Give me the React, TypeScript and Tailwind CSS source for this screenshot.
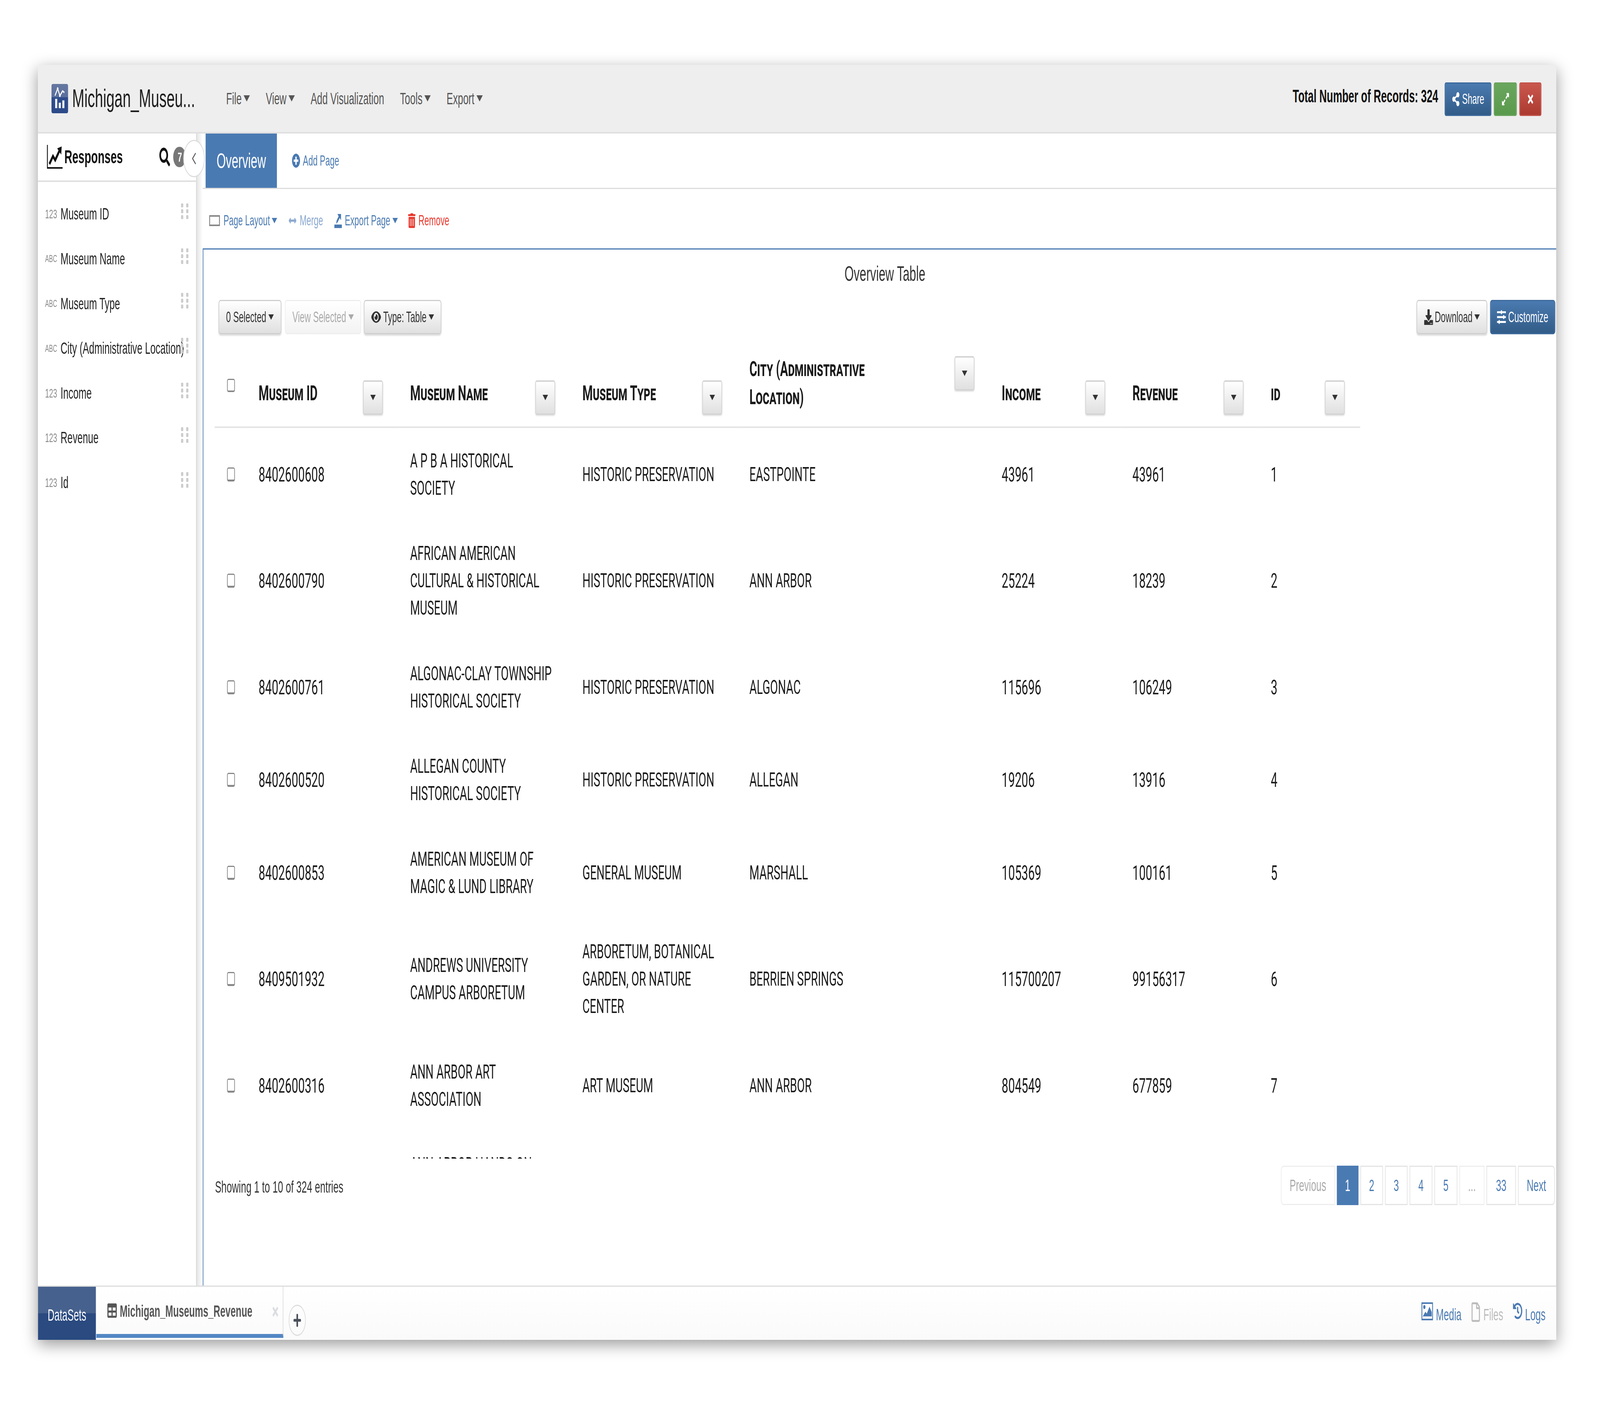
import { ChevronLeft } from "lucide-react";
import {
  FaSearch,
  FaShareAlt,
  FaExpandAlt,
  FaTimes,
  FaPlusCircle,
  FaArrowsAltH,
  FaTrashAlt,
  FaEye,
  FaDownload,
  FaSlidersH,
  FaTable,
  FaPlus,
  FaRegFile,
  FaHistory,
} from "react-icons/fa";

const fields = [
  { kind: "123", name: "Museum ID" },
  { kind: "ABC", name: "Museum Name" },
  { kind: "ABC", name: "Museum Type" },
  { kind: "ABC", name: "City (Administrative Location)" },
  { kind: "123", name: "Income" },
  { kind: "123", name: "Revenue" },
  { kind: "123", name: "Id" },
];

const rows = [
  ["8402600608", "A P B A HISTORICAL\nSOCIETY", "HISTORIC PRESERVATION", "EASTPOINTE", "43961", "43961", "1"],
  ["8402600790", "AFRICAN AMERICAN\nCULTURAL & HISTORICAL\nMUSEUM", "HISTORIC PRESERVATION", "ANN ARBOR", "25224", "18239", "2"],
  ["8402600761", "ALGONAC-CLAY TOWNSHIP\nHISTORICAL SOCIETY", "HISTORIC PRESERVATION", "ALGONAC", "115696", "106249", "3"],
  ["8402600520", "ALLEGAN COUNTY\nHISTORICAL SOCIETY", "HISTORIC PRESERVATION", "ALLEGAN", "19206", "13916", "4"],
  ["8402600853", "AMERICAN MUSEUM OF\nMAGIC & LUND LIBRARY", "GENERAL MUSEUM", "MARSHALL", "105369", "100161", "5"],
  ["8409501932", "ANDREWS UNIVERSITY\nCAMPUS ARBORETUM", "ARBORETUM, BOTANICAL\nGARDEN, OR NATURE\nCENTER", "BERRIEN SPRINGS", "115700207", "99156317", "6"],
  ["8402600316", "ANN ARBOR ART\nASSOCIATION", "ART MUSEUM", "ANN ARBOR", "804549", "677859", "7"],
  ["", "ANN ARBOR HANDS-ON\nMUSEUM", "", "", "", "", ""],
];

const columns = [
  { label: "Museum ID", width: "w-[678px]" },
  { label: "Museum Name", width: "w-[771px]" },
  { label: "Museum Type", width: "w-[747px]" },
  { label: "City (Administrative\nLocation)", width: "w-[1129px]" },
  { label: "Income", width: "w-[585px]" },
  { label: "Revenue", width: "w-[619px]" },
  { label: "id", width: "w-[453px]" },
];

const pages = [
  { label: "Previous", cls: "w-[242px] rounded-l-[12px] text-[#aaaaaa] border-[#eeeeee]" },
  { label: "1", cls: "w-[96px] bg-[#4a7ab2] text-white border-[#4a7ab2]" },
  { label: "2", cls: "w-[101px] text-[#4a7ab2] border-[#e4e4e4]" },
  { label: "3", cls: "w-[101px] text-[#4a7ab2] border-[#e4e4e4]" },
  { label: "4", cls: "w-[102px] text-[#4a7ab2] border-[#e4e4e4]" },
  { label: "5", cls: "w-[103px] text-[#4a7ab2] border-[#e4e4e4]" },
  { label: "...", cls: "w-[112px] text-[#aaaaaa] border-[#eeeeee]" },
  { label: "33", cls: "w-[132px] text-[#4a7ab2] border-[#e4e4e4]" },
  { label: "Next", cls: "w-[165px] rounded-r-[12px] text-[#4a7ab2] border-[#e4e4e4]" },
];

function Caret({ className = "" }: { className?: string }) {
  return (
    <span
      className={`inline-block w-0 h-0 border-x-[12px] border-x-transparent border-t-[14px] ${className}`}
    />
  );
}

function Logo() {
  return (
    <svg viewBox="0 0 75 75" className="w-[75px] h-[75px] shrink-0">
      <defs>
        <linearGradient id="logoFill" x1="0" y1="0" x2="0" y2="1">
          <stop offset="0" stopColor="#66789f" />
          <stop offset="0.45" stopColor="#5a6f9f" />
          <stop offset="0.46" stopColor="#2f4d8c" />
          <stop offset="1" stopColor="#2c4a88" />
        </linearGradient>
      </defs>
      <rect width="75" height="75" rx="6" fill="url(#logoFill)" />
      <path d="M16 30 L28 12 L38 30 L50 18 L58 22" fill="none" stroke="#fff" strokeWidth="4" />
      <circle cx="28" cy="12" r="3.5" fill="#fff" />
      <circle cx="38" cy="30" r="3.5" fill="#fff" />
      <rect x="17" y="38" width="9" height="24" fill="#fff" />
      <rect x="33" y="48" width="9" height="14" fill="#fff" />
      <rect x="49" y="42" width="9" height="20" fill="#fff" />
    </svg>
  );
}

function TrendIcon() {
  return (
    <svg viewBox="0 0 72 62" className="w-[72px] h-[62px] shrink-0">
      <path d="M2 0 V59 H70" fill="none" stroke="currentColor" strokeWidth="4" />
      <path d="M11 49 L27 29 L37 39 L56 15" fill="none" stroke="currentColor" strokeWidth="8" />
      <path d="M46 9 L66 4 L64 25 Z" fill="currentColor" />
    </svg>
  );
}

function MediaIcon() {
  return (
    <svg viewBox="0 0 52 46" className="w-[52px] h-[46px] shrink-0 fill-current">
      <rect x="2" y="2" width="48" height="42" fill="none" stroke="currentColor" strokeWidth="4" />
      <circle cx="13" cy="12" r="5" />
      <path d="M6 36 L18 24 L24 29 L36 11 L46 25 V36 Z" />
    </svg>
  );
}

function ExportIcon() {
  return (
    <svg viewBox="0 0 34 38" className="w-[34px] h-[38px] fill-current">
      <rect x="0" y="29" width="34" height="9" />
      <path d="M14 2 L30 2 L30 18 L24 12 L15 23 L8 27 L10 19 L19 8 Z" />
    </svg>
  );
}

function Grip() {
  return (
    <div className="grid grid-cols-2 gap-x-[13px] gap-y-[5px] mb-[14px] mr-[34px] shrink-0">
      {[0, 1, 2, 3, 4, 5].map((i) => (
        <span key={i} className="w-[10px] h-[10px] rounded-[2px] bg-[#cccccc]" />
      ))}
    </div>
  );
}

function GrayButton({ className = "", children }: { className?: string; children: React.ReactNode }) {
  return (
    <button className={`flex items-center justify-center h-[88px] rounded-[9px] border-[3px] border-[#cfcfcf] bg-linear-to-b from-white to-[#e0e0e0] text-[38px] text-[#333333] shadow-[0_4px_4px_rgba(0,0,0,0.12)] ${className}`}>
      {children}
    </button>
  );
}

function HeaderButton({ className = "", children }: { className?: string; children: React.ReactNode }) {
  return (
    <button className={`flex items-center justify-center h-[86px] rounded-[6px] border-[3px] text-white bg-linear-to-b ${className}`}>
      {children}
    </button>
  );
}

function MenuItem({ label }: { label: string }) {
  return (
    <span className="flex items-center gap-[9px]">
      {label}
      <span className="inline-block w-0 h-0 border-x-[14px] border-x-transparent border-t-[16px] border-t-[#555555]" />
    </span>
  );
}

export default function App() {
  // the page is laid out at 7159px; squeeze it if the window is narrower than that
  const fit = Math.min(1, window.innerWidth / 7159);

  return (
    <div className="w-screen h-[3603px] overflow-hidden bg-white">
      <div
        className="w-[7159px] h-[3603px] origin-top-left pt-[166px] pl-[170px] font-[family-name:'Liberation_Sans',sans-serif]"
        style={{ transform: `scaleX(${fit})` }}
      >
        <div className="w-[6793px] h-[3265px] flex flex-col bg-white shadow-[0_12px_50px_rgba(0,0,0,0.4)]">
          {/* top bar */}
          <div className="h-[176px] shrink-0 flex items-center bg-[#eeeeee] border-b-[4px] border-[#e0e0e0] pl-[60px] pr-[66px]">
            <Logo />
            <span className="ml-[18px] w-[549px] text-[65.5px] leading-none text-[#1c1c1c] whitespace-nowrap">
              Michigan_Museu...
            </span>
            <div className="ml-[140px] flex items-center gap-[71px] text-[43px] text-[#555555]">
              <MenuItem label="File" />
              <MenuItem label="View" />
              <span>Add Visualization</span>
              <MenuItem label="Tools" />
              <MenuItem label="Export" />
            </div>
            <span className="ml-auto mb-[12px] text-[46px] font-bold text-[#111111]">
              Total Number of Records: 324
            </span>
            <div className="ml-[29px] mt-[4px] flex gap-[11px]">
              <HeaderButton className="w-[209px] gap-[10px] text-[37px] border-[#3c6a9c] from-[#4a7ab0] to-[#325c88]">
                <FaShareAlt className="w-[36px] h-[36px]" />
                Share
              </HeaderButton>
              <HeaderButton className="w-[103px] border-[#69a35c] from-[#6aa65e] to-[#5a9a4c]">
                <FaExpandAlt className="w-[36px] h-[36px]" />
              </HeaderButton>
              <HeaderButton className="w-[99px] border-[#c2524a] from-[#c9574e] to-[#ac3a30]">
                <FaTimes className="w-[34px] h-[34px]" />
              </HeaderButton>
            </div>
          </div>

          <div className="flex-1 min-h-0 flex">
            {/* fields sidebar */}
            <div className="relative z-10 w-[713px] shrink-0 border-r-[6px] border-[#dddddd] bg-white">
              <div className="h-[124px] flex items-center border-b-[4px] border-[#e0e0e0] pl-[40px] text-[#111111]">
                <TrendIcon />
                <span className="ml-[6px] text-[49px] font-bold">Responses</span>
                <FaSearch className="ml-[164px] w-[48px] h-[48px]" />
                <span className="ml-[14px] w-[56px] h-[52px] rounded-full bg-[#777777] text-white text-[34px] font-bold flex items-center pl-[20px]">
                  7
                </span>
              </div>
              <div className="absolute left-[650px] top-[16px] w-[96px] h-[96px] rounded-full bg-white border-[3px] border-[#dddddd] flex items-center justify-center text-[#555555]">
                <ChevronLeft className="w-[52px] h-[52px]" strokeWidth={1.5} />
              </div>
              <div className="pt-[25px]">
                {fields.map((f) => (
                  <div key={f.name} className="h-[114.6px] flex items-center pl-[32px]">
                    <span className={`w-[69px] shrink-0 text-[#888888] ${f.kind === "123" ? "text-[32px]" : "text-[26px]"}`}>
                      {f.kind}
                    </span>
                    <span className="flex-1 w-0 whitespace-nowrap text-[42.5px] text-[#222222]">{f.name}</span>
                    <Grip />
                  </div>
                ))}
              </div>
            </div>
            <div className="w-[24px] shrink-0 bg-linear-to-r from-[#e8e8e8] to-white" />

            {/* main column */}
            <div className="flex-1 min-w-0 flex flex-col">
              <div className="h-[142px] shrink-0 flex items-center border-b-[3px] border-[#dddddd] pl-[13px]">
                <div className="h-full w-[319px] bg-[#4a7ab2] text-white text-[53px] flex items-center justify-center">
                  Overview
                </div>
                <div className="ml-[67px] flex items-center gap-[12px] text-[37px] text-[#4a7ab2]">
                  <FaPlusCircle className="w-[37px] h-[37px]" />
                  Add Page
                </div>
              </div>

              <div className="h-[152px] shrink-0 pt-[10px] pl-[29px] flex items-center text-[37px] text-[#4a7ab2]">
                <span className="w-[48px] h-[28px] border-[4px] border-[#888888]" />
                <span className="ml-[16px]">Page Layout</span>
                <Caret className="ml-[8px] border-t-[#4a7ab2]" />
                <FaArrowsAltH className="ml-[47px] w-[44px] h-[34px] text-[#8aa8d0]" />
                <span className="ml-[10px] text-[#8aa8d0]">Merge</span>
                <span className="ml-[50px]"><ExportIcon /></span>
                <span className="ml-[13px]">Export Page</span>
                <Caret className="ml-[10px] border-t-[#4a7ab2]" />
                <FaTrashAlt className="ml-[46px] w-[33px] h-[38px] text-[#e8352a]" />
                <span className="ml-[13px] text-[#e8352a]">Remove</span>
              </div>

              <div className="flex-1 min-h-0 border-t-[3px] border-l-[3px] border-[#4a7ab2] pt-[32px]">
                <div className="pl-[46px] text-center text-[53px] leading-[60px] text-[#333333]">Overview Table</div>

                <div className="mt-[37px] pl-[68px] pr-[4px] flex items-center">
                  <GrayButton className="w-[281px] gap-[10px]">
                    0 Selected
                    <Caret className="border-t-[#333333]" />
                  </GrayButton>
                  <GrayButton className="ml-[16px] w-[341px] gap-[10px] border-[#eeeeee] from-white to-[#f3f3f3] text-[#aaaaaa] shadow-none">
                    View Selected
                    <Caret className="border-t-[#aaaaaa]" />
                  </GrayButton>
                  <GrayButton className="ml-[12px] w-[347px] gap-[10px]">
                    <FaEye className="w-[44px] h-[40px]" />
                    Type: Table
                    <Caret className="border-t-[#333333]" />
                  </GrayButton>
                  <GrayButton className="ml-auto w-[316px] gap-[8px]">
                    <FaDownload className="w-[40px] h-[40px]" />
                    Download
                    <Caret className="border-t-[#333333]" />
                  </GrayButton>
                  <button className="ml-[13px] w-[292px] h-[88px] rounded-[9px] border-[3px] border-[#3c6a9c] bg-linear-to-b from-[#4a7ab0] to-[#325c88] text-white text-[38px] flex items-center justify-center gap-[10px]">
                    <FaSlidersH className="w-[40px] h-[40px]" />
                    Customize
                  </button>
                </div>

                <div className="mt-[56px] ml-[50px] w-[5126px] h-[2055px] overflow-hidden">
                  <table className="table-fixed w-[5126px] border-collapse font-[family-name:Roboto,sans-serif] text-[#1a1a1a]">
                    <thead>
                      <tr className="border-b-[4px] border-[#e4e4e4]">
                        <th className="w-[144px] align-top pl-[56px] pt-[58px]">
                          <input type="checkbox" className="block appearance-none w-[35px] h-[34px] rounded-[6px] border-[3px] border-b-[4px] border-[#888888] bg-white" />
                        </th>
                        {columns.map((c) => (
                          <th
                            key={c.label}
                            className={`${c.width} align-bottom pl-[53px] pr-[69px] text-left ${c.label.startsWith("City") ? "pb-[39px]" : "pb-[30px]"}`}
                          >
                            <div className="flex items-start justify-between">
                              <span className="-mt-[3px] whitespace-pre-line text-[53px] leading-[72px] font-bold [font-variant-caps:small-caps]">
                                {c.label}
                              </span>
                              <button className="shrink-0 w-[89px] h-[88px] rounded-[7px] border-[3px] border-[#d2d2d2] bg-linear-to-b from-white to-[#e0e0e0] shadow-[0_3px_4px_rgba(0,0,0,0.12)] flex items-center justify-center">
                                <Caret className="border-t-[#333333]" />
                              </button>
                            </div>
                          </th>
                        ))}
                      </tr>
                    </thead>
                    <tbody>
                      {rows.map((r, i) => (
                        <tr key={i}>
                          <td className="pl-[56px] align-middle">
                            {r[0] && (
                              <input type="checkbox" className="block appearance-none w-[35px] h-[36px] rounded-[6px] border-[3px] border-b-[5px] border-[#888888] bg-white" />
                            )}
                          </td>
                          {r.map((cell, j) => (
                            <td
                              key={j}
                              className={`pl-[53px] pr-[20px] py-[48.75px] align-middle leading-[70px] whitespace-pre-line ${j === 0 || j >= 4 ? "text-[52.5px]" : "text-[50.5px]"}`}
                            >
                              {cell}
                            </td>
                          ))}
                        </tr>
                      ))}
                    </tbody>
                  </table>
                </div>

                <div className="mt-[18px] pl-[52px] pr-[6px] flex items-center justify-between text-[42.5px]">
                  <span className="mt-[8px] text-[#333333]">Showing 1 to 10 of 324 entries</span>
                  <div className="flex gap-[9px] text-[42px]">
                    {pages.map((p) => (
                      <span
                        key={p.label}
                        className={`h-[101px] border-[3px] flex items-center justify-center ${p.cls}`}
                      >
                        {p.label}
                      </span>
                    ))}
                  </div>
                </div>
              </div>
            </div>
          </div>

          {/* datasets bar */}
          <div className="h-[139px] shrink-0 flex border-t-[3px] border-[#dddddd] bg-linear-to-b from-white to-[#fafafa]">
            <div className="w-[259px] bg-linear-to-b from-[#46618e] from-50% to-[#2a4a80] to-50% text-white text-[42px] flex items-center justify-center pt-[8px]">
              DataSets
            </div>
            <div className="relative ml-[2px] w-[837px] flex items-start pl-[47px] pt-[40px] border-r-[3px] border-[#dddddd] border-b-[10px] border-b-[#5387c4] mb-[5px] text-[#555555]">
              <FaTable className="w-[47px] h-[42px]" />
              <span className="ml-[11px] text-[41.7px] font-bold leading-[46px]">Michigan_Museums_Revenue</span>
              <FaTimes className="absolute right-[15px] top-[46px] w-[36px] h-[36px] text-[#dcdde3]" />
            </div>
            <div className="ml-[24px] mt-[46px] w-[76px] h-[80px] rounded-full border-[3px] border-[#dddddd] flex items-center justify-center text-[#4a4f5a]">
              <FaPlus className="w-[38px] h-[38px]" />
            </div>
            <div className="ml-auto pr-[48px] pt-[40px] flex items-start text-[42px] text-[#4a7ab2]">
              <MediaIcon />
              <span className="ml-[13px]">Media</span>
              <FaRegFile className="ml-[43px] w-[42px] h-[50px] text-[#bbbbbb]" />
              <span className="ml-[13px] text-[#bbbbbb]">Files</span>
              <FaHistory className="ml-[43px] w-[43px] h-[44px]" />
              <span className="ml-[12px]">Logs</span>
            </div>
          </div>
        </div>
      </div>
    </div>
  );
}
